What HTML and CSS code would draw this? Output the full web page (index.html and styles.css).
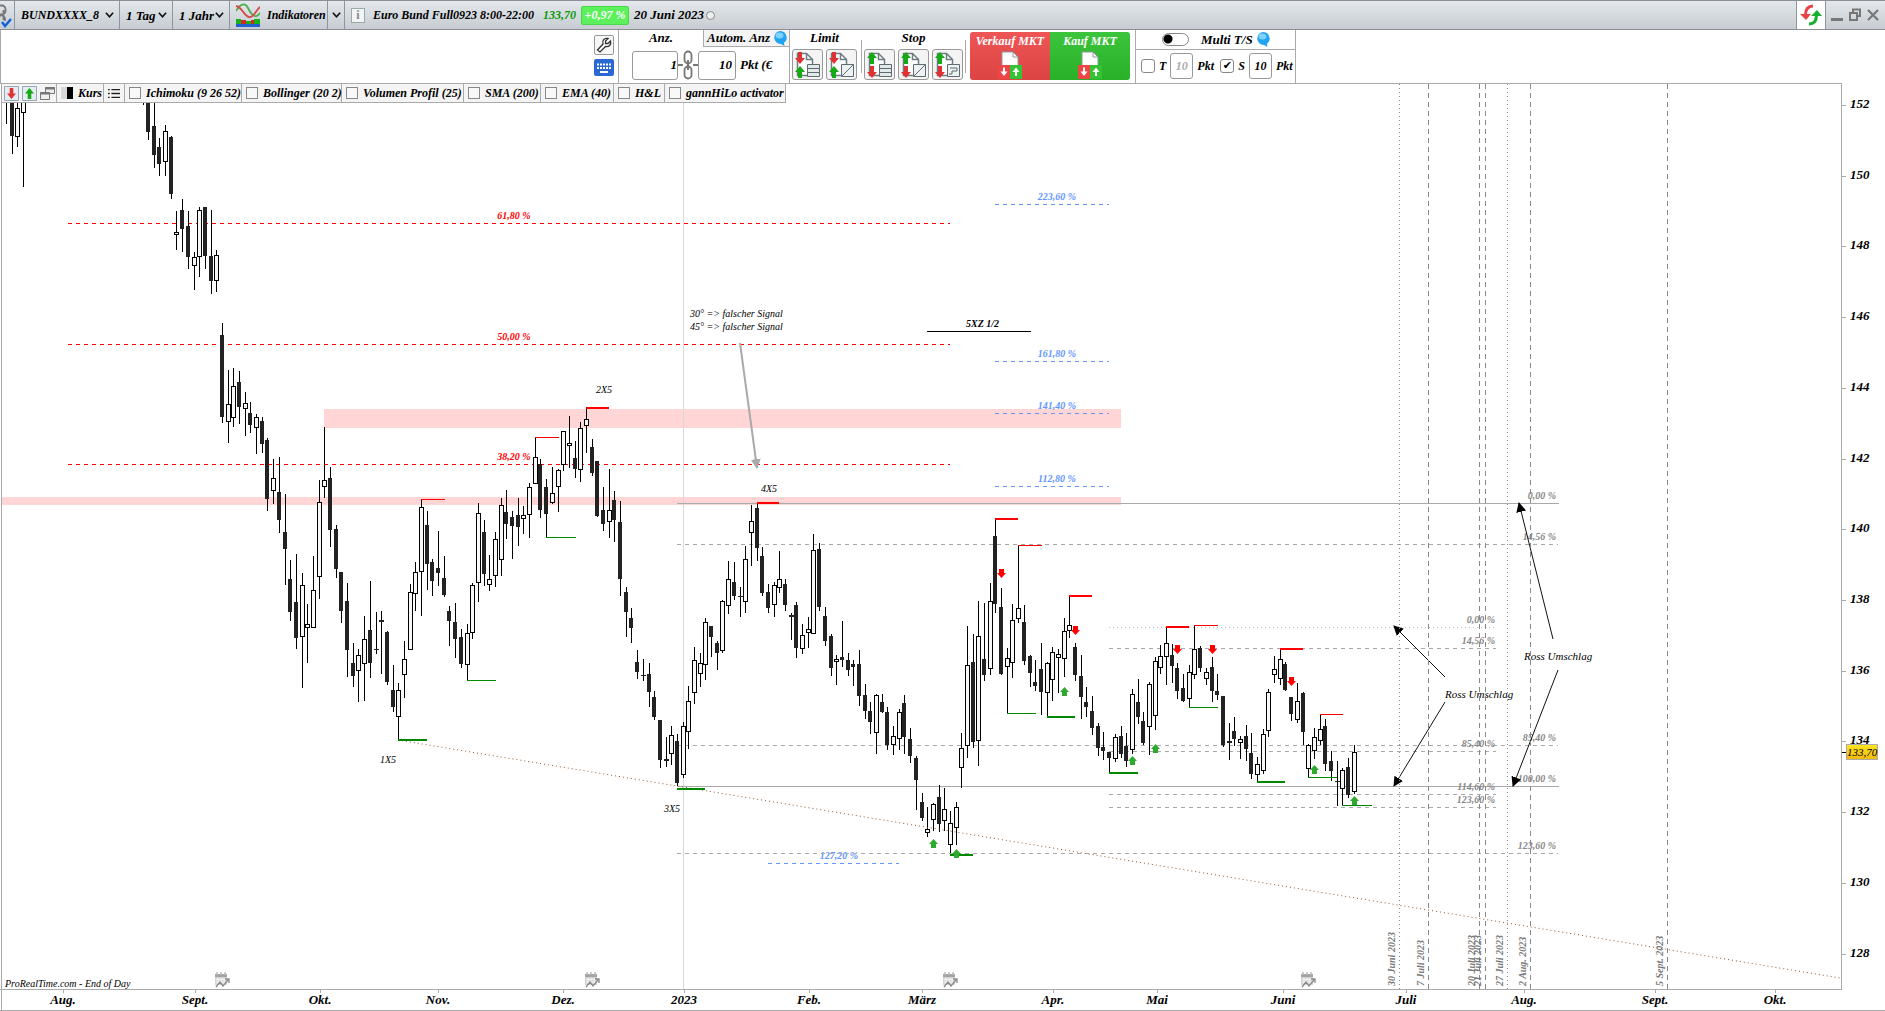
FILE: index.html
```
<!DOCTYPE html>
<html lang="de">
<head>
    <meta charset="UTF-8">
    <meta name="viewport" content="width=device-width, initial-scale=1.0">
    <title>Euro Bund Full0923 - 1 Tag</title>
    <link rel="stylesheet" href="styles.css">
</head>
<body>
    <!-- shared icons -->
    <svg class="defs" width="0" height="0" aria-hidden="true">
        <symbol id="chevron" viewBox="0 0 10 8"><path d="M1 1.5 5 6 9 1.5" fill="none" stroke="#111" stroke-width="1.8"/></symbol>
        <symbol id="bubble" viewBox="0 0 15 15">
            <path d="M7.500 0a6.500 6.500 0 1 0 .5 13l3.500 2-.5-3.300A6.500 6.500 0 0 0 7.500 0Z" fill="#22a4f0"/>
            <ellipse cx="6.500" cy="4.500" rx="4" ry="3" fill="#7fd0fb"/>
        </symbol>
        <symbol id="page" viewBox="0 0 24 28">
            <path d="M4.500 2.500h9l6 6v16h-15z" fill="#fff" stroke="#6c7c80" stroke-width="1.500"/>
            <path d="M13.500 2.500v6h6" fill="none" stroke="#6c7c80" stroke-width="1.500"/>
        </symbol>
        <symbol id="down" viewBox="0 0 10 12"><path d="M3 0h4v6h3l-5 6-5-6h3z" fill="#e03232"/></symbol>
        <symbol id="up" viewBox="0 0 10 12"><path d="M3 12h4V6h3L5 0 0 6h3z" fill="#14aa14"/></symbol>
        <symbol id="rows" viewBox="0 0 13 14"><path d="M.5.500h12v12H.5zM.5 4.500h12M.5 8.500h12" fill="#e3e9e9" stroke="#5c6c70"/></symbol>
        <symbol id="slash" viewBox="0 0 13 14"><path d="M.5.500h12v12H.5zM1 12 12 1" fill="#eef1f1" stroke="#5c6c70"/></symbol>
        <symbol id="trail" viewBox="0 0 13 14"><path d="M.5.500h12v12H.5zM3 4h7v3H5v3H2" fill="#eef1f1" stroke="#5c6c70"/></symbol>
        <symbol id="trade" viewBox="0 0 26 28">
            <path d="M5 1h11l5 5v10H5z" fill="#fff" stroke="#8a9a9a"/><path d="M16 1v5h5" fill="none" stroke="#8a9a9a"/>
            <path d="M1 14h12v14H1z" fill="#ee4646"/><path d="M13 14h12v14H13z" fill="#35c235"/>
            <path d="M6 16.500h2v4h2.500L7 25l-3.500-4.500H6zM18 25h2v-4h2.500L19 16.500 15.500 21H18z" fill="#fff"/>
        </symbol>
        <symbol id="calendar" viewBox="0 0 16 16">
            <path d="M1 2h12v11H1z" fill="#d4d4d4"/><path d="M1 2h12v3H1z" fill="#a4a4a4"/>
            <path d="M3 0v3M7 0v3M11 0v3" stroke="#bbb" stroke-width="1.500"/>
            <path d="M2 7.500h10M2 10h9M4 6v6M7 6v6M10 6v6" stroke="#f4f4f4"/>
            <path d="m2 15 4-5 3 4 5-6M11 7h4v4" fill="none" stroke="#888" stroke-width="1.300"/>
        </symbol>
    </svg>

    <header class="titlebar">
        <button class="cell link" aria-label="Verknüpfen">
            <svg width="14" height="26" viewBox="0 0 14 26"><path d="M0 3.500h2a3.500 3.500 0 0 1 3.500 3.500v2A3.500 3.500 0 0 1 2 12.500H0M3.500 8v10M0 13.500h1a3.500 3.500 0 0 1 4 3.500v2" fill="none" stroke="#777" stroke-width="1.800"/><path d="m2 20 3 4 6-7" fill="none" stroke="#1464d8" stroke-width="2.500"/></svg>
        </button>
        <div class="cell picker symbol">
            <select aria-label="Symbol"><option>BUNDXXXX_8</option></select>
            <svg width="9" height="8"><use href="#chevron"/></svg>
        </div>
        <div class="cell picker unit">
            <select aria-label="Zeiteinheit"><option>1 Tag</option></select>
            <svg width="9" height="8"><use href="#chevron"/></svg>
        </div>
        <div class="cell picker range">
            <select aria-label="Zeitraum"><option>1 Jahr</option></select>
            <svg width="9" height="8"><use href="#chevron"/></svg>
        </div>
        <button class="cell indicators">
            <svg width="24" height="24" viewBox="0 0 24 24">
                <path d="M0 8C4 1 9-1 12 5s7 12 12 5" fill="none" stroke="#4caf50" stroke-width="1.800"/>
                <path d="M0 3c6 1 8 10 13 11s6-6 11-10" fill="none" stroke="#d84848" stroke-width="1.800"/>
                <path d="M0 16h5v5H0zm10 2h5v3h-5zm8-2h6v5h-6z" fill="#18b018"/><path d="M5 17h5v4H5zm10 0h3v4h-3z" fill="#d02828"/><path d="M0 21h24v3H0z" fill="#2060d0"/>
            </svg>
            Indikatoren
        </button>
        <button class="cell more" aria-label="Mehr Indikatoren"><svg width="9" height="8"><use href="#chevron"/></svg></button>
        <div class="quote">
            <button class="info" aria-label="Info">i</button>
            <span class="name">Euro Bund Full0923 8:00-22:00</span>
            <span class="last">133,70</span>
            <span class="change">+0,97 %</span>
            <span class="date">20 Juni 2023</span>
            <span class="circle"></span>
        </div>
        <button class="refresh" aria-label="Aktualisieren">
            <svg width="22" height="22" viewBox="0 0 22 22">
                <path d="M13 2C8 2 5.500 5 5.500 11" fill="none" stroke="#e84444" stroke-width="3"/><path d="M0 10h11l-5 6z" fill="#e84444"/>
                <path d="M9 20c5 0 7.500-3 7.500-9" fill="none" stroke="#18b030" stroke-width="3"/><path d="M11 12h11l-5-6z" fill="#18b030"/>
            </svg>
        </button>
        <div class="window">
            <button aria-label="Minimieren"><svg width="12" height="14" viewBox="0 0 12 14"><path d="M0 10h12v3H0z" fill="#777"/></svg></button>
            <button aria-label="Wiederherstellen"><svg width="12" height="14" viewBox="0 0 12 14"><path d="M4 4V1.500h7V8H8M1 5h7v7H1z" fill="none" stroke="#777" stroke-width="2"/></svg></button>
            <button aria-label="Schließen"><svg width="12" height="14" viewBox="0 0 12 14"><path d="m1 2 10 10M11 2 1 12" fill="none" stroke="#777" stroke-width="2.200"/></svg></button>
        </div>
    </header>

    <section class="toolbar">
        <div class="tools">
            <button class="wrench" aria-label="Einstellungen"><svg width="16" height="16" viewBox="0 0 16 16"><path d="M12 1.500 9.500 4v2.500H12l2.500-2.500c1 4-1.500 6-5 5.500L4 15l-2.500-2L7 7c-1-3.500 1-6.500 5-5.500Z" fill="#fff" stroke="#333" stroke-width="1.300"/></svg></button>
            <button class="keyboard" aria-label="Tastatur"><svg width="20" height="16" viewBox="0 0 20 16"><path d="M3 4.500h14M3 8h14" stroke="#fff" stroke-width="2" stroke-dasharray="2 1"/><path d="M6 11h8v2H6z" fill="#fff"/></svg></button>
        </div>
        <div class="amount">
            <div class="amount-head">
                <label for="anz">Anz.</label>
                <button class="auto">Autom. Anz <svg width="15" height="15"><use href="#bubble"/></svg></button>
            </div>
            <div class="amount-row">
                <input id="anz" type="text" value="1">
                <svg width="20" height="30" viewBox="0 0 20 30"><path d="M0 15h5M15 15h5M10 10v10" stroke="#777" stroke-width="2"/><rect x="6.500" y="1.500" width="7" height="12" rx="3.500" fill="none" stroke="#777" stroke-width="1.800"/><rect x="6.500" y="16.500" width="7" height="12" rx="3.500" fill="none" stroke="#777" stroke-width="1.800"/></svg>
                <input id="pkt" class="points" type="text" value="10">
                <label for="pkt" class="unit-label">Pkt (€</label>
            </div>
        </div>
        <div class="orders">
            <div class="order-group">
                <span>Limit</span>
                <div class="order-buttons">
                    <button aria-label="Limit Kauf"><svg width="28" height="28" viewBox="0 0 28 28"><use href="#page" width="24" height="28"/><use href="#down" x="2" y="1" width="10" height="12"/><use href="#up" x="2" y="15" width="10" height="12"/><use href="#rows" x="14" y="13" width="13" height="14"/></svg></button>
                    <button aria-label="Limit Alarm"><svg width="28" height="28" viewBox="0 0 28 28"><use href="#page" width="24" height="28"/><use href="#down" x="2" y="1" width="10" height="12"/><use href="#up" x="2" y="15" width="10" height="12"/><use href="#slash" x="14" y="13" width="13" height="14"/></svg></button>
                </div>
            </div>
            <div class="order-group stop">
                <span>Stop</span>
                <div class="order-buttons">
                    <button aria-label="Stop Kauf"><svg width="28" height="28" viewBox="0 0 28 28"><use href="#page" width="24" height="28"/><use href="#up" x="2" y="1" width="10" height="12"/><use href="#down" x="2" y="15" width="10" height="12"/><use href="#rows" x="14" y="13" width="13" height="14"/></svg></button>
                    <button aria-label="Stop Alarm"><svg width="28" height="28" viewBox="0 0 28 28"><use href="#page" width="24" height="28"/><use href="#up" x="2" y="1" width="10" height="12"/><use href="#down" x="2" y="15" width="10" height="12"/><use href="#slash" x="14" y="13" width="13" height="14"/></svg></button>
                    <button aria-label="Trailing Stop"><svg width="28" height="28" viewBox="0 0 28 28"><use href="#page" width="24" height="28"/><use href="#up" x="2" y="1" width="10" height="12"/><use href="#down" x="2" y="15" width="10" height="12"/><use href="#trail" x="14" y="13" width="13" height="14"/></svg></button>
                </div>
            </div>
            <div class="market">
                <button class="sell"><span>Verkauf MKT</span><svg width="26" height="28"><use href="#trade"/></svg></button>
                <button class="buy"><span>Kauf MKT</span><svg width="26" height="28"><use href="#trade"/></svg></button>
            </div>
        </div>
        <div class="multi">
            <div class="multi-head">
                <input id="multi" class="switch" type="checkbox">
                <label for="multi">Multi T/S</label>
                <svg width="15" height="15"><use href="#bubble"/></svg>
            </div>
            <div class="multi-row">
                <input id="t" class="tick" type="checkbox"><label for="t">T</label>
                <input class="off" type="text" value="10" aria-label="Target"><span class="pkt">Pkt</span>
                <input id="s" class="tick" type="checkbox" checked><label for="s">S</label>
                <input type="text" value="10" aria-label="Stop"><span class="pkt">Pkt</span>
            </div>
        </div>
    </section>

    <main class="chart">
        <div class="legend">
            <div class="legend-cell icons">
                <svg width="15" height="15" viewBox="0 0 15 15"><path d="M.5.500h14v14H.5z" fill="#e4edf3" stroke="#98a8b4"/><use href="#down" x="3" y="2" width="9" height="11"/></svg>
                <svg width="15" height="15" viewBox="0 0 15 15"><path d="M.5.500h14v14H.5z" fill="#e4edf3" stroke="#98a8b4"/><use href="#up" x="3" y="2" width="9" height="11"/></svg>
                <svg width="15" height="15" viewBox="0 0 15 15"><path d="M5.500 1.500h9v6h-9zM.5 6.500h9v7h-9z" fill="#eee" stroke="#777"/><path d="M5 2.500h10M0 7.500h10" stroke="#777" stroke-width="2"/></svg>
            </div>
            <div class="legend-cell price"><i class="swatch"></i><span>Kurs</span></div>
            <div class="legend-cell list"><svg width="12" height="13" viewBox="0 0 14 13"><path d="M0 2h2M0 6.500h2M0 11h2M4 2h10M4 6.500h10M4 11h10" stroke="#222" stroke-width="1.600"/></svg></div>
            <label class="legend-cell w-ichi"><input class="box" type="checkbox"><span>Ichimoku (9 26 52)</span></label>
            <label class="legend-cell w-boll"><input class="box" type="checkbox"><span>Bollinger (20 2)</span></label>
            <label class="legend-cell w-vol"><input class="box" type="checkbox"><span>Volumen Profil (25)</span></label>
            <label class="legend-cell w-ma"><input class="box" type="checkbox"><span>SMA (200)</span></label>
            <label class="legend-cell w-ma"><input class="box" type="checkbox"><span>EMA (40)</span></label>
            <label class="legend-cell w-hl"><input class="box" type="checkbox"><span>H&amp;L</span></label>
            <label class="legend-cell w-gann"><input class="box" type="checkbox"><span>gannHiLo activator</span></label>
        </div>

        <svg class="plot" viewBox="0 83 1885 928" role="img" aria-label="Euro Bund Tageschart">
            <defs>
                <linearGradient id="gold" x2="0" y2="1"><stop offset="0" stop-color="#ffe620"/><stop offset="1" stop-color="#f4b80c"/></linearGradient>
                <marker id="head" viewBox="0 0 10 10" refX="9" refY="5" markerWidth="10" markerHeight="10" markerUnits="userSpaceOnUse" orient="auto"><path d="M0 0 10 5 0 10z"/></marker>
                <marker id="headGray" viewBox="0 0 10 10" refX="9" refY="5" markerWidth="10" markerHeight="10" markerUnits="userSpaceOnUse" orient="auto"><path d="M0 0 10 5 0 10z" fill="#aaa" stroke="none"/></marker>
            </defs>
            <g class="bands">
                <rect x="324" y="409" width="797" height="19"/>
                <rect x="2" y="497" width="1119" height="8"/>
            </g>
            <rect x="683" y="84" width="1" height="905" fill="#d8d8d8"/>
            <g id="levels"></g>
            <g id="candles" shape-rendering="crispEdges"></g>
            <path class="trend" d="M398 740 683 787 1840 978"/>
            <g id="marks"></g>
            <g class="arrows">
                <line x1="1445" y1="677" x2="1394" y2="626" marker-end="url(#head)"/>
                <line x1="1445" y1="702" x2="1394" y2="786" marker-end="url(#head)"/>
                <line x1="1553" y1="639" x2="1519" y2="503" marker-end="url(#head)"/>
                <line x1="1558" y1="670" x2="1513" y2="786" marker-end="url(#head)"/>
                <line class="gray" x1="740" y1="343" x2="757" y2="468" marker-end="url(#headGray)"/>
            </g>
            <g class="notes">
                <text x="380" y="763">1X5</text>
                <text x="596" y="393">2X5</text>
                <text x="664" y="812">3X5</text>
                <text x="761" y="492">4X5</text>
                <text x="690" y="317">30° =&gt; falscher Signal</text>
                <text x="690" y="330">45° =&gt; falscher Signal</text>
                <text class="strong" x="966" y="327">5XZ 1/2</text>
                <text class="ross" x="1445" y="698">Ross Umschlag</text>
                <text class="ross" x="1524" y="660">Ross Umschlag</text>
                <text x="5" y="987">ProRealTime.com - End of Day</text>
                <rect x="927" y="331" width="104" height="1"/>
            </g>
            <g id="events"></g>
            <g class="frame" shape-rendering="crispEdges">
                <path d="M1.500 83V1010M0 989.500H1841.500V83M0 1010.500H1885M0 83.500H1842"/>
            </g>
            <g id="axis"></g>
            <path d="M1842 752.500h4" stroke="#000"/>
            <rect x="1846.500" y="744.500" width="31" height="15" fill="url(#gold)" stroke="#aaa"/>
            <text class="tag" x="1862" y="756">133,70</text>
        </svg>
    </main>
    <script src="script.js"></script>
</body>
</html>
```
FILE: styles.css
```
* {
    box-sizing: border-box;
}

body {
    margin: 0;
    background: #fff;
    color: #000;
    font: italic bold 13px "Liberation Serif", serif;
    overflow-x: hidden;
}

button, input, select {
    font: inherit;
    color: inherit;
    margin: 0;
    padding: 0;
    border: 0;
    background: none;
}

svg {
    flex: none;
    display: block;
}

.defs {
    position: absolute;
}

/* top bar */
.titlebar {
    display: flex;
    height: 30px;
    border-top: 1px solid #8a9096;
    border-bottom: 1px solid #8a9096;
    background: linear-gradient(#e4e8ec, #c6ccd1);
}

.cell {
    display: flex;
    align-items: center;
    border-right: 1px solid #8f959b;
}

.link {
    width: 15px;
}

.picker {
    padding: 0 5px 0 6px;
    justify-content: space-between;
}

.picker select {
    appearance: none;
    flex: 1;
    min-width: 0;
    white-space: nowrap;
}

.symbol {
    width: 105px;
}

.symbol select {
    font-size: 12px;
}

.unit {
    width: 53px;
}

.range {
    width: 57px;
}

.indicators {
    width: 98px;
    padding-left: 6px;
    gap: 7px;
    font-size: 12px;
}

.more {
    width: 17px;
    justify-content: center;
}

.quote {
    display: flex;
    flex: 1;
    align-items: center;
    padding-left: 6px;
    white-space: nowrap;
}

.info {
    width: 14px;
    height: 15px;
    margin-right: 8px;
    border: 1px solid #9aa;
    background: #f2f4f5;
    color: #889;
    font: bold 12px "Liberation Serif", serif;
    line-height: 12px;
}

.name {
    width: 170px;
    font-size: 12px;
}

.last {
    width: 35px;
    color: #0a980a;
    font-size: 12px;
}

.change {
    width: 48px;
    margin: 0 5px 0 3px;
    padding: 1px 0;
    border: 1px solid #48d848;
    border-radius: 2px;
    background: #5cf05c;
    color: #fff;
    font-size: 12px;
    text-align: center;
}

.date {
    width: 72px;
}

.circle {
    width: 9px;
    height: 9px;
    border: 1px solid #888;
    border-radius: 50%;
    background: #eee;
}

.refresh {
    width: 30px;
    padding-left: 3px;
    border: solid #8f959b;
    border-width: 0 1px;
    background: #fff;
}

.window {
    display: flex;
    align-items: center;
    gap: 6px;
    padding: 0 6px 0 5px;
}

/* trading toolbar */
.toolbar {
    display: flex;
    height: 53px;
    border-left: 1px solid #aaa;
}

.tools {
    display: flex;
    flex-direction: column;
    align-items: flex-end;
    gap: 4px;
    width: 618px;
    padding: 5px 4px 0 0;
    border-right: 1px solid #aaa;
}

.wrench {
    width: 20px;
    height: 20px;
    padding-left: 1px;
    border: 1px solid #999;
    border-radius: 2px;
    background: #f6f6f6;
}

.keyboard {
    width: 20px;
    height: 17px;
    border-radius: 2px;
    background: #2a68d4;
}

.amount {
    width: 171px;
    border-right: 1px solid #aaa;
}

.amount-head {
    display: flex;
    height: 17px;
    line-height: 16px;
}

.amount-head label {
    flex: 1;
    text-align: center;
}

.auto {
    display: flex;
    align-items: center;
    justify-content: space-between;
    width: 86px;
    padding: 0 1px 0 3px;
    border: solid #aaa;
    border-width: 0 0 1px 1px;
    background: #f3f3f3;
    white-space: nowrap;
}

.amount-row {
    display: flex;
    align-items: center;
    padding: 3px 0 0 13px;
}

.toolbar input[type="text"] {
    width: 23px;
    height: 26px;
    border: 1px solid #999;
    border-radius: 3px;
    text-align: center;
}

.amount-row input[type="text"] {
    width: 46px;
    height: 29px;
    text-align: right;
}

.amount-row .points[type="text"] {
    width: 38px;
    padding-right: 3px;
}

.unit-label {
    padding-left: 4px;
    white-space: nowrap;
}

.orders {
    display: flex;
    gap: 4px;
    width: 346px;
    padding-left: 2px;
    border-right: 1px solid #aaa;
}

.order-group {
    display: flex;
    flex-direction: column;
    gap: 3px;
    text-align: center;
    line-height: 16px;
}

.stop {
    padding: 0 3px;
    background: linear-gradient(#aaa, #aaa) 0 10px / 1px 33px no-repeat, linear-gradient(#aaa, #aaa) 100% 10px / 1px 33px no-repeat;
}

.order-buttons {
    display: flex;
    gap: 3px;
}

.order-buttons button {
    width: 31px;
    height: 31px;
    border: 1px solid #999;
    border-radius: 3px;
    background: #f4f4f4;
}

.market {
    display: flex;
    height: 48px;
    margin-top: 2px;
}

.market button {
    display: flex;
    flex-direction: column;
    align-items: center;
    gap: 2px;
    width: 80px;
    padding-top: 2px;
    color: #fff;
    font-size: 12px;
    white-space: nowrap;
}

.market .sell {
    border-radius: 3px 0 0 3px;
    background: linear-gradient(#ee5656, #dc4444);
}

.market .buy {
    border-radius: 0 3px 3px 0;
    background: linear-gradient(#3cc43c, #28b028);
}

.multi {
    width: 160px;
    border-right: 1px solid #aaa;
}

.multi-head {
    display: flex;
    align-items: center;
    height: 20px;
    padding-left: 26px;
    border-bottom: 1px solid #aaa;
}

.multi-head label {
    width: 67px;
    padding-left: 12px;
    white-space: nowrap;
}

.switch {
    appearance: none;
    width: 27px;
    height: 13px;
    border: 1px solid #888;
    border-radius: 7px;
    background: radial-gradient(circle at 5px 5px, #000 4px, #fff 5px);
}

.multi-row {
    display: flex;
    align-items: center;
    gap: 4px;
    height: 32px;
    padding-left: 5px;
    font-size: 12px;
}

.tick, .box {
    appearance: none;
    flex: none;
    width: 14px;
    height: 14px;
    border: 1px solid #888;
    border-radius: 3px;
    background: #fff;
}

.tick:checked::before {
    content: "✔";
    display: block;
    font: 11px "DejaVu Sans", sans-serif;
    line-height: 12px;
    text-align: center;
}

.multi-row .off {
    color: #aaa;
}

.pkt {
    width: 19px;
}

/* chart */
.chart {
    position: relative;
}

.plot {
    width: 100%;
    height: auto;
}

.legend {
    position: absolute;
    top: 0;
    left: 1px;
    display: flex;
    height: 20px;
    border: 1px solid #aaa;
    background: #f4f4f4;
    font-size: 12px;
}

.legend-cell {
    display: flex;
    align-items: center;
    gap: 5px;
    padding-left: 4px;
    border-right: 1px solid #aaa;
    white-space: nowrap;
}

.legend-cell:last-child {
    border-right: 0;
}

.icons {
    gap: 3px;
    padding: 0 1px 0 2px;
}

.price {
    width: 47px;
}

.swatch {
    width: 12px;
    height: 12px;
    background: linear-gradient(90deg, #d8d8d8 6px, #000 6px);
}

.list {
    width: 21px;
}

.box {
    width: 12px;
    height: 12px;
    border-radius: 0;
    background: #f8f8f8;
}

.w-ichi {
    width: 117px;
}

.w-boll {
    width: 100px;
}

.w-vol {
    width: 122px;
}

.w-ma {
    width: 77px;
}

.w-ma + .w-ma {
    width: 73px;
}

.w-hl {
    width: 51px;
}

.w-gann {
    width: 120px;
}

.bands rect {
    fill: #ffd5d5;
}

.trend {
    fill: none;
    stroke: #94582a;
    stroke-dasharray: 1 3;
}

.level-text {
    font-size: 10px;
}

.arrows {
    stroke: #111;
}

.arrows .gray {
    stroke: #aaa;
    stroke-width: 2;
}

.notes {
    font-size: 10px;
    font-weight: normal;
}

.notes .strong {
    font-weight: bold;
}

.notes .ross {
    font-size: 11px;
}

.frame path {
    fill: none;
    stroke: #aaa;
}

.event-text {
    font-size: 10px;
    fill: #777;
}

.tag {
    font-size: 11px;
    font-weight: normal;
    text-anchor: middle;
}
```
FILE: script.js
```
// x, high, low, body top, body bottom, 1 = rising / 0 = falling
const candles = [
    [6,90,124,90,90,0],[12,90,154,90,136,0],[17,102,147,108,137,1],[23,90,187,90,113,1],
    [143,90,105,90,90,0],[148,90,140,90,132,0],[154,100,168,126,155,0],[159,138,176,147,164,0],
    [165,125,176,131,162,1],[171,136,199,137,194,0],[176,211,250,232,235,1],[182,199,252,210,229,0],
    [188,211,269,226,257,0],[194,252,290,257,266,1],[199,207,277,210,257,1],[205,207,269,207,256,0],
    [211,210,294,256,281,0],[216,250,292,255,281,1],[222,323,423,335,417,0],[228,370,443,404,422,1],
    [233,368,427,386,418,1],[239,371,424,382,407,0],[245,392,436,403,409,1],[250,402,433,413,425,0],
    [256,414,454,417,428,1],[262,417,453,421,444,0],[267,438,511,440,499,0],[273,459,504,478,491,1],
    [279,457,533,492,520,0],[285,494,585,532,549,0],[290,560,621,579,612,0],[296,554,649,602,638,0],
    [302,573,688,585,637,1],[307,604,663,624,628,1],[313,556,628,590,628,1],[319,480,599,502,577,1],
    [324,427,498,480,487,1],[330,467,547,478,530,0],[336,525,578,529,569,0],[341,572,623,572,611,0],
    [347,583,677,601,650,0],[353,643,687,663,676,0],[358,649,702,655,671,1],[364,616,701,639,664,1],
    [370,581,678,630,663,0],[376,612,654,649,650,0],[381,611,674,620,622,0],[387,631,685,632,682,0],
    [393,665,712,690,707,0],[398,683,740,690,717,1],[404,641,698,659,675,1],[410,584,650,592,650,1],
    [415,562,611,572,594,1],[421,499,616,507,572,1],[427,511,590,525,564,0],[432,559,596,562,581,0],
    [438,531,586,568,573,0],[444,556,597,578,595,0],[449,606,646,611,621,0],[455,603,658,622,639,0],
    [461,629,668,637,664,0],[467,624,680,633,665,1],[472,583,639,585,633,1],[478,503,602,513,583,1],
    [484,520,586,532,574,0],[489,555,591,579,585,1],[495,532,587,539,576,1],[501,498,576,505,560,1],
    [506,490,539,512,524,0],[512,511,559,517,526,0],[518,498,546,515,527,0],[523,506,534,515,519,1],
    [529,483,538,487,515,1],[535,437,484,457,484,1],[540,459,518,464,510,0],[546,479,537,487,514,0],
    [552,467,504,493,503,1],[558,469,512,470,487,1],[563,431,471,431,465,1],[569,416,468,443,446,1],
    [575,441,478,458,469,0],[580,422,482,428,470,1],[586,408,453,419,426,1],[592,439,476,447,473,0],
    [597,461,517,461,516,0],[603,487,531,510,524,0],[609,469,538,510,522,1],[614,491,542,500,520,0],
    [620,501,596,522,579,0],[626,587,637,592,612,0],[631,608,643,618,628,0],[637,650,679,662,672,0],
    [643,659,681,675,676,0],[649,663,707,674,692,0],[654,691,720,697,717,0],[660,720,768,720,760,0],
    [666,737,767,759,761,0],[671,726,765,735,754,1],[677,734,786,741,783,0],[683,722,778,726,775,1],
    [688,686,749,701,732,1],[694,647,704,660,693,1],[700,653,687,663,674,1],[705,618,680,622,665,1],
    [711,626,657,626,637,0],[717,641,670,643,653,0],[722,600,653,601,651,1],[728,561,614,579,606,1],
    [734,562,600,582,596,0],[740,587,617,596,597,0],[745,546,613,559,602,1],[751,505,566,521,533,1],
    [757,503,561,508,548,0],[762,547,596,556,593,0],[768,584,613,592,608,0],[774,582,617,585,605,1],
    [779,551,593,579,588,1],[785,579,611,584,605,0],[791,613,640,615,617,0],[796,602,658,605,648,0],
    [802,624,654,635,649,1],[808,617,648,629,633,1],[813,534,634,550,634,1],[819,543,611,549,607,0],
    [825,607,646,616,641,0],[831,634,676,636,668,0],[836,655,685,659,662,1],[842,621,667,657,660,0],
    [848,653,676,660,670,0],[853,660,686,664,667,0],[859,650,706,664,696,0],[865,684,719,695,711,0],
    [870,702,734,711,722,0],[876,694,754,695,733,1],[882,694,713,702,712,0],[887,707,750,712,745,0],
    [893,726,755,736,745,1],[899,709,750,712,739,1],[904,695,754,703,737,0],[910,728,763,739,756,0],
    [916,756,810,758,780,0],[922,793,821,802,818,0],[927,807,837,829,833,1],[933,803,831,804,820,1],
    [939,785,832,797,824,0],[944,788,831,809,821,1],[950,811,853,823,845,1],[956,802,845,807,828,1],
    [961,733,788,748,768,1],[967,626,758,665,746,1],[973,634,748,662,742,0],[978,601,766,636,741,1],
    [984,603,681,659,675,0],[990,583,675,601,669,1],[995,519,613,536,604,0],[1001,588,675,607,674,0],
    [1007,648,713,658,667,1],[1012,604,678,620,663,1],[1018,545,623,608,619,1],[1024,605,665,622,661,0],
    [1030,655,687,656,673,0],[1035,660,691,682,686,0],[1041,643,715,669,692,0],[1047,662,717,663,693,1],
    [1052,647,701,652,680,1],[1058,649,693,654,658,1],[1064,618,677,631,659,1],[1069,596,638,625,631,1],
    [1075,643,681,647,675,0],[1081,655,719,676,697,0],[1086,687,717,702,707,0],[1092,696,735,711,728,0],
    [1098,723,756,726,748,0],[1103,732,760,747,751,0],[1109,752,773,752,758,0],[1115,734,762,737,759,1],
    [1121,726,758,736,754,0],[1126,733,767,746,761,0],[1132,689,754,694,750,1],[1138,679,724,702,717,0],
    [1143,712,745,721,743,0],[1149,682,755,684,727,1],[1155,657,730,661,716,1],[1160,645,674,656,668,1],
    [1166,627,685,643,657,1],[1172,644,683,655,666,0],[1177,663,699,668,691,0],[1183,674,702,688,701,0],
    [1189,665,707,672,699,1],[1194,625,679,649,675,1],[1200,646,672,648,668,0],[1206,668,685,672,679,1],
    [1212,657,702,667,691,0],[1217,674,700,691,695,0],[1223,696,747,696,745,0],[1229,723,760,741,743,0],
    [1234,717,746,731,739,0],[1240,736,759,739,743,1],[1246,725,761,736,749,0],[1251,733,779,753,774,0],
    [1257,757,782,764,775,1],[1263,729,774,734,771,1],[1268,689,737,692,731,1],[1274,656,683,669,675,1],
    [1280,649,685,659,679,1],[1285,662,691,664,690,0],[1291,697,721,697,714,0],[1297,683,723,701,720,1],
    [1303,692,745,693,732,0],[1308,744,777,745,769,1],[1314,728,759,737,751,1],[1320,715,745,729,741,1],
    [1325,719,771,726,764,0],[1331,751,781,761,771,0],[1337,761,806,781,782,0],[1342,768,806,770,789,1],
    [1348,758,798,767,795,0],[1354,745,794,752,792,1]
];

// x1, x2, y, colour, dash, label, label x, anchor
const levels = [
    [68, 950, 223, "#f00", "4 4", "61,80 %", 514, "middle"],
    [68, 950, 344, "#f00", "4 4", "50,00 %", 514, "middle"],
    [68, 950, 464, "#f00", "4 4", "38,20 %", 514, "middle"],
    [995, 1109, 204, "#6496ff", "4 4", "223,60 %", 1057, "middle"],
    [995, 1109, 361, "#6496ff", "4 4", "161,80 %", 1057, "middle"],
    [995, 1109, 413, "#6496ff", "4 4", "141,40 %", 1057, "middle"],
    [995, 1109, 486, "#6496ff", "4 4", "112,80 %", 1057, "middle"],
    [768, 899, 863, "#6496ff", "4 4", "127,20 %", 839, "middle"],
    [677, 1559, 503, "#aaa", "", "0,00 %", 1556, "end"],
    [677, 1558, 544, "#aaa", "4 4", "14,56 %", 1556, "end"],
    [677, 1558, 745, "#aaa", "4 4", "85,40 %", 1556, "end"],
    [677, 1559, 786, "#aaa", "", "100,00 %", 1556, "end"],
    [677, 1558, 853, "#aaa", "4 4", "123,60 %", 1556, "end"],
    [1109, 1494, 627, "#bbb", "1 3", "0,00 %", 1495, "end"],
    [1109, 1496, 648, "#aaa", "4 4", "14,56 %", 1495, "end"],
    [1109, 1496, 751, "#aaa", "4 4", "85,40 %", 1495, "end"],
    [1109, 1496, 794, "#aaa", "4 4", "114,60 %", 1495, "end"],
    [1109, 1496, 807, "#aaa", "4 4", "123,60 %", 1495, "end"]
];

// swing highs and lows: x1, x2, y, thickness
const highs = [[421,445,499,1],[535,559,437,1],[586,609,407,2],[757,779,502,2],[995,1018,518,2],[1018,1042,545,1],
    [1069,1092,595,2],[1166,1189,626,2],[1194,1218,625,1],[1280,1303,648,2],[1320,1343,714,1]];
const lows = [[398,427,739,2],[467,496,680,1],[546,576,537,1],[677,705,788,2],[950,973,854,2],[1007,1036,713,1],
    [1047,1075,716,2],[1109,1138,772,2],[1189,1218,707,1],[1257,1285,781,2],[1308,1337,777,1],[1342,1372,805,1]];

const sells = [[1001,573],[1075,630],[1177,649],[1212,649],[1291,681]];
const buys = [[933,844],[956,854],[1064,692],[1132,761],[1155,749],[1314,770],[1354,801]];

const events = [
    [1399, "30 Juni 2023", "1 3"], [1428, "7 Juli 2023", "5 4"], [1479, "20 Juli 2023", "5 4"], [1485, "21 Juli 2023", "5 4"],
    [1507, "27 Juli 2023", "1 3"], [1530, "2 Aug. 2023", "5 4"], [1667, "5 Sept. 2023", "5 4"]
];

const months = [[63,"Aug."],[195,"Sept."],[320,"Okt."],[438,"Nov."],[563,"Dez."],[684,"2023"],[809,"Feb."],[922,"März"],
    [1053,"Apr."],[1157,"Mai"],[1283,"Juni"],[1406,"Juli"],[1524,"Aug."],[1655,"Sept."],[1775,"Okt."]];

function fill(id, markup) {
    document.getElementById(id).innerHTML = markup;
}

function box(x, y, w, h, color) {
    return `<rect x="${x}" y="${y}" width="${w}" height="${h}" fill="${color}"/>`;
}

fill("candles", candles.map(([x, high, low, top, bottom, up]) => {
    let out = box(x, high, 1, low - high, "#000");
    if (up) {
        out += box(x - 2, top, 5, bottom - top, "#000") + box(x - 1, top + 1, 3, Math.max(1, bottom - top - 2), "#f8f8f8");
    } else if (bottom > top) {
        out += box(x - 2, top, bottom - top < 3 ? 5 : 4, bottom - top, "#222");
    }
    return out;
}).join(""));

fill("levels", levels.map(([x1, x2, y, color, dash, label, lx, anchor]) => {
    const ink = color === "#aaa" || color === "#bbb" ? "#888" : color;
    return `<path d="M${x1} ${y + 0.5}H${x2}" stroke="${color}" stroke-dasharray="${dash}"/>
        <text class="level-text" x="${lx}" y="${y - 4}" fill="${ink}" text-anchor="${anchor}">${label}</text>`;
}).join(""));

fill("marks",
    highs.map(([a, b, y, h]) => box(a, y, b - a, h, "#f00")).join("") +
    lows.map(([a, b, y, h]) => box(a, y, b - a, h, "#080")).join("") +
    sells.map(([x, y]) => `<path d="M${x - 2} ${y - 4}h5v4h2l-4.500 5-4.500-5h2z" fill="#f00"/>`).join("") +
    buys.map(([x, y]) => `<path d="M${x - 2} ${y + 4}h5v-4h2l-4.500-5-4.500 5h2z" fill="#2eaa2e"/>`).join("")
);

fill("events",
    events.map(([x, label, dash]) => `<path d="M${x + 0.5} 84V989" stroke="#888" stroke-dasharray="${dash}"/>
        <text class="event-text" transform="translate(${x - 4} 986) rotate(-90)">${label}</text>`).join("") +
    [214, 584, 942, 1300].map(x => `<use href="#calendar" x="${x}" y="972" width="16" height="16"/>`).join("")
);

let axis = "";
for (let price = 128; price <= 152; price += 2) {
    const y = Math.round(105 + (152 - price) * 35.36);
    axis += box(1842, y, 4, 1, "#aaa") + `<text x="1850" y="${y + 3}">${price}</text>`;
}
months.forEach(([x, name]) => {
    axis += box(x, 989, 1, 4, "#aaa") + `<text x="${x}" y="1004" text-anchor="middle">${name}</text>`;
});
fill("axis", axis);
```
